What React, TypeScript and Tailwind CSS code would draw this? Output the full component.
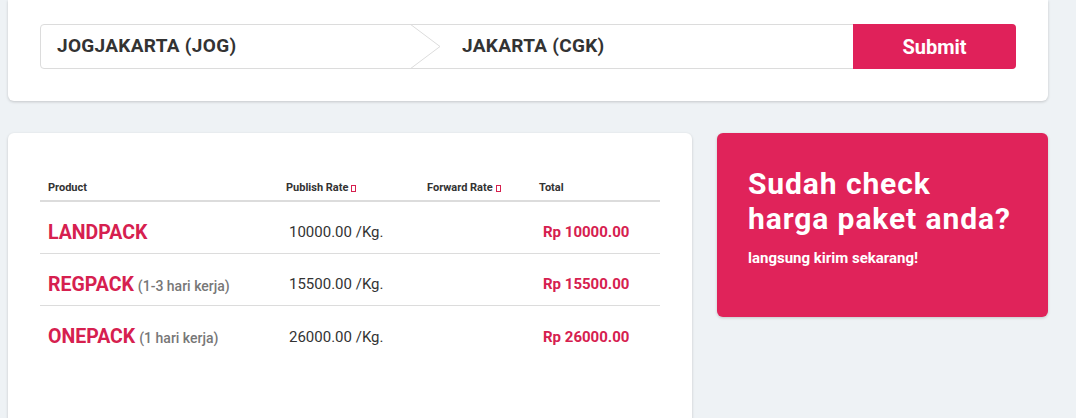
import React from 'react';

type Row = { name: string; note?: string; rate: string; total: string };

const ROWS: Row[] = [
    { name: 'LANDPACK', rate: '10000.00 /Kg.', total: 'Rp 10000.00' },
    { name: 'REGPACK', note: '(1-3 hari kerja)', rate: '15500.00 /Kg.', total: 'Rp 15500.00' },
    { name: 'ONEPACK', note: '(1 hari kerja)', rate: '26000.00 /Kg.', total: 'Rp 26000.00' },
];

const SortMark = () => (
    <span className="inline-block w-[5px] h-[7px] border border-[#d6204f] ml-[3px] align-middle" />
);

export default function App() {
    return (
        <div className="min-h-screen bg-[#eef2f5] font-['Roboto',sans-serif] text-[#333]">
            <div className="ml-2 w-[1040px]">
                {/* Route search */}
                <div className="bg-white rounded-b-md shadow-[0_1px_3px_rgba(0,0,0,0.18)] px-8 pt-6 pb-8">
                    <div className="flex h-[45px] border border-[#dcdcdc] rounded-[4px]">
                        <div className="w-[369px] flex items-center pl-4 text-[19px] font-bold tracking-[0.3px]">
                            JOGJAKARTA (JOG)
                        </div>
                        <svg width="30" height="45" viewBox="0 0 30 45" className="shrink-0 -my-px">
                            <polyline points="0,0 30,22.5 0,45" fill="none" stroke="#dcdcdc" strokeWidth="1" />
                        </svg>
                        <div className="flex-1 flex items-center pl-[22px] text-[19px] font-bold tracking-[0.3px]">
                            JAKARTA (CGK)
                        </div>
                        <button className="w-[163px] -my-px -mr-px bg-[#e0215a] text-white text-[20px] font-bold rounded-r-[4px]">
                            Submit
                        </button>
                    </div>
                </div>

                <div className="flex gap-[25px] mt-8">
                    {/* Rate table */}
                    <div className="w-[684px] h-[320px] bg-white rounded-t-md shadow-[0_1px_3px_rgba(0,0,0,0.18)] px-8 pt-[47px]">
                        <div className="grid grid-cols-[238px_141px_112px_130px] border-b-2 border-[#dcdcdc] pb-[3px] text-[11px] font-bold">
                            <div className="pl-2">Product</div>
                            <div className="pl-2">Publish Rate<SortMark /></div>
                            <div className="pl-2">Forward Rate<SortMark /></div>
                            <div className="pl-2">Total</div>
                        </div>
                        {ROWS.map((r, i) => (
                            <div
                                key={r.name}
                                className={`grid grid-cols-[238px_141px_112px_130px] items-center h-[52px] pt-[11px] ${i < ROWS.length - 1 ? 'border-b border-[#dcdcdc]' : ''}`}
                            >
                                <div className="pl-2 flex items-baseline gap-1">
                                    <span className="text-[19.5px] font-bold text-[#d6204f]">{r.name}</span>
                                    {r.note && <span className="text-[14px] font-medium text-[#777]">{r.note}</span>}
                                </div>
                                <div className="pl-[11px] text-[15px]">{r.rate}</div>
                                <div />
                                <div className="pl-3 text-[15px] font-bold text-[#d6204f]">{r.total}</div>
                            </div>
                        ))}
                    </div>

                    {/* Promo */}
                    <div className="w-[331px] h-[184px] bg-[#e0235a] rounded-md shadow-[0_1px_3px_rgba(0,0,0,0.18)] pl-[31px] pt-[33px] text-white">
                        <div className="text-[30px] font-bold leading-[35px] tracking-[0.9px]">Sudah check</div>
                        <div className="text-[30px] font-bold leading-[35px] tracking-[0.9px]">harga paket anda?</div>
                        <div className="mt-[11px] text-[15px] font-bold">langsung kirim sekarang!</div>
                    </div>
                </div>
            </div>
        </div>
    );
}
